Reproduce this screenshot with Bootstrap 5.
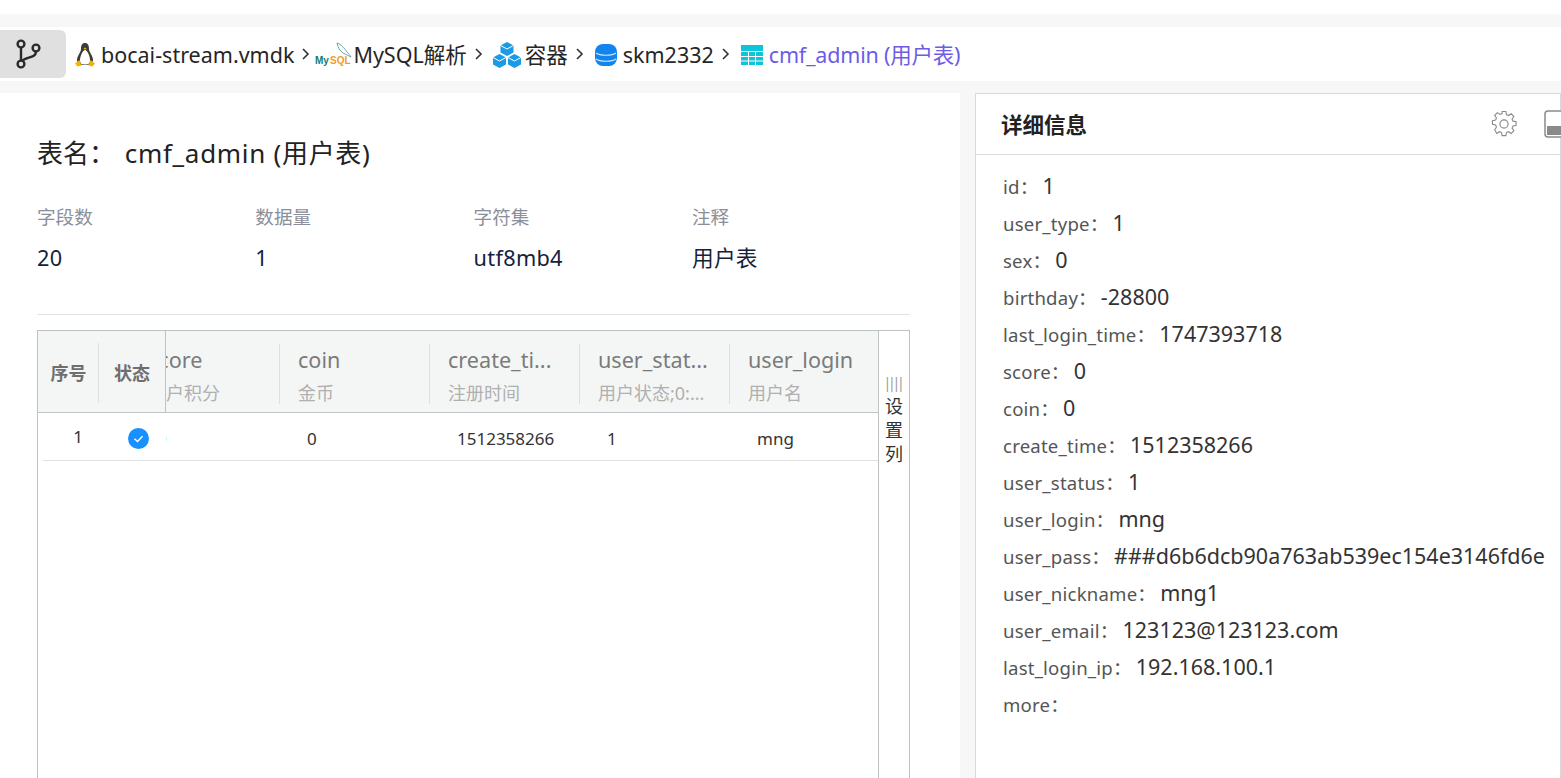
<!DOCTYPE html>
<html lang="zh"><head><meta charset="utf-8"><title>cmf_admin</title>
<link rel="stylesheet" href="https://cdn.jsdelivr.net/npm/bootstrap@5.3.0/dist/css/bootstrap.min.css">
<style>
html,body{height:778px;overflow:hidden}
body{font-family:"Noto Sans","Noto Sans CJK SC",sans-serif;background:#fff;color:#222}
.top-gap{height:14px}
.shell{background:#f7f7f7;padding:13px 0 0;height:764px}
.crumbs{height:54px;background:#fff;margin-bottom:12px;font-size:21.5px;line-height:1;color:#262626}
.branch{width:66px;height:48px;background:#e0e0e0;border-radius:0 6px 6px 0;margin-right:9px;padding-left:16px;flex:none}
.crumb{height:54px;white-space:nowrap;padding-top:1px}
.sep{width:12px;flex:none;margin-left:6px;margin-right:7px}
.sep-tight{margin-right:3px}
.crumb-on{color:#6c5ce7;letter-spacing:-.2px}
.gap-icon{margin-right:6px}
.gap-icon2{margin-right:3px}
.shift-icon{margin-left:2px}
.shift-icon2{margin-left:2px}
.panes{height:685px}
.left-pane{width:960px;flex:none;background:#fff;padding:0 50px 0 37px}
.right-pane{width:586px;flex:none;margin-left:15px;background:#fff;border:1px solid #d9d9d9;border-bottom:0}
.tname{font-size:26px;line-height:34px;padding-top:43px;height:91px;white-space:nowrap}
.tname-v{letter-spacing:.7px;margin-left:3px}
.meta{height:131px;border-bottom:1px solid #e3e3e3;margin-bottom:15px;padding-top:21px}
.meta-col{width:218.3px;flex:none}
.meta-k{font-size:18.6px;color:#8b8f99;line-height:24px;height:39px}
.meta-v{font-size:21.7px;line-height:28px;color:#14233c;letter-spacing:.3px}
.grid-box{width:873px;height:460px;border:1px solid #bfc2c4;border-bottom:0}
.grid-main{width:840px;flex:none}
.grid-head{height:82px;background:#f4f6f5;border-bottom:1px solid #bfc4c6}
.fix-h{font-size:18px;font-weight:700;color:#6f6f6f;text-align:center;padding-top:3px}
.fix-a{width:61px;flex:none}
.fix-b{width:65px;flex:none;position:relative;padding-left:1px}
.col-line{width:1px;height:60px;background:#dde0e0;flex:none;margin-top:2px;margin-left:-1px}
.fix-edge{width:1px;background:#bfc2c4;height:81px;flex:none;margin-left:1px}
.scroller{overflow:hidden;width:713px;flex:none}
.scroll-in{margin-left:-37px;width:750px}
.hcol{width:150px;flex:none;padding-left:19px;position:relative}
.hcol + .hcol::before{content:"";position:absolute;left:0;top:13px;height:60px;width:1px;background:#dde0e0}
.h-top{font-size:21.6px;line-height:28px;color:#7b7b7b;padding-top:15px;white-space:nowrap;overflow:hidden}
.h-sub{font-size:18px;line-height:24px;color:#b0b0b0;padding-top:7px;white-space:nowrap}
.grid-row{height:48px;border-bottom:1px solid #dfe1e1;margin-left:5px;font-size:17px;color:#333}
.cell-a{width:70px;flex:none;text-align:center;padding-top:1px;font-size:17px}
.cell-b{width:50px;flex:none;text-align:center;margin-right:3px;padding-top:3px}
.cell-c{width:150px;flex:none;padding-left:28px;padding-top:4px}
.scroll-row{overflow:hidden;width:712px;flex:none}
.setcol{width:31px;flex:none;border-left:1px solid #bfc2c4;font-size:18px;line-height:24px;text-align:center;color:#333;padding-top:40px}
.bars{color:#999;font-size:14px;line-height:23px;display:block;letter-spacing:-3.2px;padding-right:3px}
.r-head{height:61px;border-bottom:1px solid #dcdcdc;padding:0 0 0 25px}
.r-title{font-size:21.5px;font-weight:700;color:#222;padding-top:2px}
.r-tools{gap:26px;margin-right:-14px}
.kv{padding:13px 0 0 27px;font-size:21.5px}
.kv-row{height:37px;line-height:36px;white-space:nowrap;color:#333}
.kv-k{font-size:18.6px;letter-spacing:.2px;color:#555;margin-right:4px}
</style></head><body>
<div class="top-gap"></div>
<div class="shell">
<div class="crumbs d-flex align-items-center">
  <div class="branch d-flex align-items-center justify-content-start">
    <svg width="26" height="30" viewBox="0 0 26 30" fill="none" stroke="#2a2a2a" stroke-width="2.4"><circle cx="5" cy="5" r="3.4"/><circle cx="5" cy="25" r="3.4"/><circle cx="20" cy="9" r="3.4"/><path d="M5 8.500v13"/><path d="M20 12.500c0 7-10 5-14 9.500"/></svg>
  </div>
  <div class="crumb d-flex align-items-center">
    <svg width="20" height="25" viewBox="0 0 20 25" class="gap-icon"><path d="M10 1c3 0 4 2.500 4 6 0 3 4 7 4 11 0 3-3 5-8 5s-8-2-8-5c0-4 4-8 4-11 0-3.500 1-6 4-6z" fill="#3c3c3c"/><path d="M10 8c2 0 5 6 5 10s-2 4.500-5 4.500-5-.5-5-4.500 3-10 5-10z" fill="#fff"/><path d="M8.500 6.500l1.500-1 1.500 1-1.500 1.200z" fill="#f5b400"/><path d="M0 21.500l4.500-3.500 2 5.500-4 1zM20 21.500L15.500 18l-2 5.500 4 1z" fill="#f5b400"/></svg>
    bocai-stream.vmdk
  </div>
  <svg class="sep sep-tight" width="12" height="14" viewBox="0 0 12 14" fill="none" stroke="#333" stroke-width="1.600"><path d="M3 2l5 5-5 5"/></svg>
  <div class="crumb d-flex align-items-center">
    <svg width="38" height="26" viewBox="0 0 38 26"><path d="M22 1c4 1 7 5 10 9 2 2 3 3 4 5-3-1-5-3-8-4-3-2-5-5-6-10z" fill="none" stroke="#3a9a94" stroke-width=".8"/><text x="0" y="22" font-size="10" font-weight="700" fill="#117b74" font-family="Liberation Sans">My</text><text x="15" y="22" font-size="10" font-weight="700" fill="#f39a2d" font-family="Liberation Sans">SQL</text></svg>
    MySQL解析
  </div>
  <svg class="sep" width="12" height="14" viewBox="0 0 12 14" fill="none" stroke="#333" stroke-width="1.600"><path d="M3 2l5 5-5 5"/></svg>
  <div class="crumb d-flex align-items-center">
    <svg width="30" height="28" viewBox="0 0 30 28" class="gap-icon2"><g fill="#1a9be6"><path d="M15 1l6.500 3.500v7L15 15l-6.500-3.500v-7z"/><path d="M7.500 13L14 16.500v7L7.500 27 1 23.500v-7z"/><path d="M22.500 13l6.500 3.500v7L22.500 27 16 23.500v-7z"/></g><g fill="none" stroke="#fff" stroke-width="1"><path d="M8.500 4.500L15 8l6.500-3.500M1 16.500L7.500 20l6.500-3.500M16 16.500l6.500 3.500 6.500-3.500"/></g></svg>
    容器
  </div>
  <svg class="sep" width="12" height="14" viewBox="0 0 12 14" fill="none" stroke="#333" stroke-width="1.600"><path d="M3 2l5 5-5 5"/></svg>
  <div class="crumb d-flex align-items-center">
    <svg width="22" height="22" viewBox="0 0 22 22" class="gap-icon shift-icon"><rect x="0" y="0" width="22" height="22" rx="8" fill="#1184ee"/><path d="M1 9c4 3 16 3 20 0M1 15c4 3 16 3 20 0" fill="none" stroke="#cfe6fb" stroke-width="1.200"/></svg>
    skm2332
  </div>
  <svg class="sep" width="12" height="14" viewBox="0 0 12 14" fill="none" stroke="#333" stroke-width="1.600"><path d="M3 2l5 5-5 5"/></svg>
  <div class="crumb crumb-on d-flex align-items-center">
    <svg width="22" height="20" viewBox="0 0 22 20" class="gap-icon shift-icon2"><rect width="22" height="20" fill="#0fc3d8"/><path d="M0 6.500h22M0 11.500h22M0 16h22M7.500 6.500V20M14.500 6.500V20" stroke="#fff" stroke-width="1"/></svg>
    cmf_admin (用户表)
  </div>
</div>
<div class="panes d-flex">
  <div class="left-pane">
    <div class="tname">表名： <span class="tname-v">cmf_admin (用户表)</span></div>
    <div class="meta d-flex">
      <div class="meta-col"><div class="meta-k">字段数</div><div class="meta-v">20</div></div>
      <div class="meta-col"><div class="meta-k">数据量</div><div class="meta-v">1</div></div>
      <div class="meta-col"><div class="meta-k">字符集</div><div class="meta-v">utf8mb4</div></div>
      <div class="meta-col"><div class="meta-k">注释</div><div class="meta-v">用户表</div></div>
    </div>
    <div class="grid-box d-flex">
      <div class="grid-main">
        <div class="grid-head d-flex align-items-center">
          <div class="fix-a fix-h">序号</div><div class="col-line"></div>
          <div class="fix-b fix-h">状态</div><div class="fix-edge"></div>
          <div class="scroller align-self-start"><div class="scroll-in d-flex">
            <div class="hcol"><div class="h-top">score</div><div class="h-sub">用户积分</div></div>
            <div class="hcol"><div class="h-top">coin</div><div class="h-sub">金币</div></div>
            <div class="hcol"><div class="h-top">create_ti...</div><div class="h-sub">注册时间</div></div>
            <div class="hcol"><div class="h-top">user_stat...</div><div class="h-sub">用户状态;0:...</div></div>
            <div class="hcol"><div class="h-top">user_login</div><div class="h-sub">用户名</div></div>
          </div></div>
        </div>
        <div class="grid-row d-flex align-items-center">
          <div class="cell-a">1</div>
          <div class="cell-b d-flex justify-content-center"><svg width="21" height="21" viewBox="0 0 21 21"><circle cx="10.500" cy="10.500" r="10.500" fill="#1890ff"/><path d="M6.500 10.800l3 2.700 5-5.300" fill="none" stroke="#fff" stroke-width="1.500"/></svg></div>
          <div class="scroll-row"><div class="scroll-in d-flex">
            <div class="cell-c">0</div><div class="cell-c">0</div><div class="cell-c">1512358266</div><div class="cell-c">1</div><div class="cell-c">mng</div>
          </div></div>
        </div>
      </div>
      <div class="setcol"><span class="bars">||||</span>设<br>置<br>列</div>
    </div>
  </div>
  <div class="right-pane">
    <div class="r-head d-flex align-items-center justify-content-between">
      <div class="r-title">详细信息</div>
      <div class="r-tools d-flex align-items-center overflow-hidden">
        <svg width="28" height="28" viewBox="0 0 24 24" fill="none" stroke="#8a8a8a" stroke-width="1"><circle cx="12" cy="12" r="3.500"/><path d="M10.300 2h3.400l.5 2.800 1.900.8 2.400-1.600 2.400 2.400-1.600 2.400.8 1.900 2.800.5v3.400l-2.800.5-.8 1.900 1.600 2.400-2.400 2.400-2.400-1.600-1.900.8-.5 2.800h-3.400l-.5-2.800-1.900-.8-2.400 1.600L3.600 18.400l1.600-2.400-.8-1.900-2.800-.5v-3.400l2.800-.5.8-1.900L3.600 5.400 6 3l2.400 1.600 1.900-.8z" transform="translate(.6 -.6) scale(.95)"/></svg>
        <svg width="30" height="28" viewBox="0 0 30 28"><rect x="1" y="1" width="40" height="26" rx="3" fill="#fff" stroke="#8a8a8a" stroke-width="1.500"/><rect x="3" y="16" width="27" height="9" fill="#8a8a8a"/></svg>
      </div>
    </div>
    <div class="kv">
      <div class="kv-row"><span class="kv-k">id：</span>1</div>
      <div class="kv-row"><span class="kv-k">user_type：</span>1</div>
      <div class="kv-row"><span class="kv-k">sex：</span>0</div>
      <div class="kv-row"><span class="kv-k">birthday：</span>-28800</div>
      <div class="kv-row"><span class="kv-k">last_login_time：</span>1747393718</div>
      <div class="kv-row"><span class="kv-k">score：</span>0</div>
      <div class="kv-row"><span class="kv-k">coin：</span>0</div>
      <div class="kv-row"><span class="kv-k">create_time：</span>1512358266</div>
      <div class="kv-row"><span class="kv-k">user_status：</span>1</div>
      <div class="kv-row"><span class="kv-k">user_login：</span>mng</div>
      <div class="kv-row"><span class="kv-k">user_pass：</span>###d6b6dcb90a763ab539ec154e3146fd6e</div>
      <div class="kv-row"><span class="kv-k">user_nickname：</span>mng1</div>
      <div class="kv-row"><span class="kv-k">user_email：</span>123123@123123.com</div>
      <div class="kv-row"><span class="kv-k">last_login_ip：</span>192.168.100.1</div>
      <div class="kv-row"><span class="kv-k">more：</span></div>
    </div>
  </div>
</div>
</div>
<script src="https://cdn.jsdelivr.net/npm/bootstrap@5.3.0/dist/js/bootstrap.bundle.min.js"></script>
</body></html>
